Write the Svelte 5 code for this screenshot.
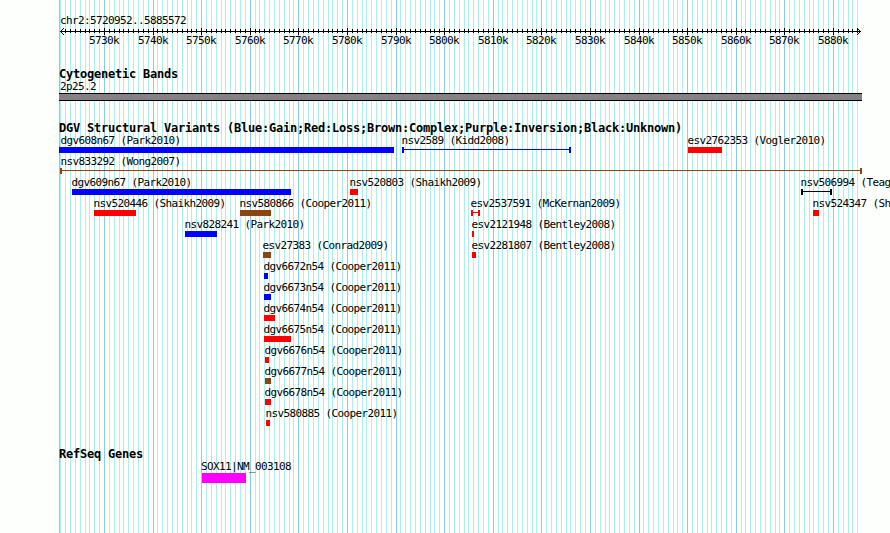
<script>
  const start = 5720952;
  const end = 5885572;
  const plotWidth = 800;
  const pad = 60;

  function toX(bp) {
    return Math.round(pad + ((bp - start) / (end - start)) * plotWidth);
  }

  const ticks = [];
  for (let bp = 5721000; bp <= end; bp += 1000) {
    ticks.push({ bp, x: toX(bp), major: bp % 10000 === 0 });
  }
  const majors = ticks.filter((t) => t.major);

  const colors = {
    gain: '#0000ff',
    loss: '#ff0000',
    complex: '#8b4513',
    unknown: '#000000'
  };

  // x and w are in image pixels, lx is where the label starts
  const lanes = [
    [
      { name: 'dgv608n67 (Park2010)', type: 'gain', x: 59, w: 335, lx: 61 },
      { name: 'nsv2589 (Kidd2008)', type: 'gain', x: 402, w: 169, span: true },
      { name: 'esv2762353 (Vogler2010)', type: 'loss', x: 688, w: 34 }
    ],
    [{ name: 'nsv833292 (Wong2007)', type: 'complex', x: 60, w: 802, span: true, lx: 61 }],
    [
      { name: 'dgv609n67 (Park2010)', type: 'gain', x: 72, w: 219 },
      { name: 'nsv520803 (Shaikh2009)', type: 'loss', x: 350, w: 8 },
      { name: 'nsv506994 (Teag', type: 'unknown', x: 801, w: 31, span: true }
    ],
    [
      { name: 'nsv520446 (Shaikh2009)', type: 'loss', x: 94, w: 42 },
      { name: 'nsv580866 (Cooper2011)', type: 'complex', x: 240, w: 31 },
      { name: 'esv2537591 (McKernan2009)', type: 'loss', x: 471, w: 9, span: true },
      { name: 'nsv524347 (Sh', type: 'loss', x: 813, w: 6 }
    ],
    [
      { name: 'nsv828241 (Park2010)', type: 'gain', x: 185, w: 32 },
      { name: 'esv2121948 (Bentley2008)', type: 'loss', x: 472, w: 2 }
    ],
    [
      { name: 'esv27383 (Conrad2009)', type: 'complex', x: 263, w: 8 },
      { name: 'esv2281807 (Bentley2008)', type: 'loss', x: 472, w: 4 }
    ],
    [{ name: 'dgv6672n54 (Cooper2011)', type: 'gain', x: 264, w: 4 }],
    [{ name: 'dgv6673n54 (Cooper2011)', type: 'gain', x: 264, w: 7 }],
    [{ name: 'dgv6674n54 (Cooper2011)', type: 'loss', x: 264, w: 11 }],
    [{ name: 'dgv6675n54 (Cooper2011)', type: 'loss', x: 264, w: 27 }],
    [{ name: 'dgv6676n54 (Cooper2011)', type: 'loss', x: 265, w: 4 }],
    [{ name: 'dgv6677n54 (Cooper2011)', type: 'complex', x: 265, w: 6 }],
    [{ name: 'dgv6678n54 (Cooper2011)', type: 'loss', x: 265, w: 6 }],
    [{ name: 'nsv580885 (Cooper2011)', type: 'loss', x: 266, w: 4 }]
  ];
</script>

<div class="browser">
  <svg class="grid" width="890" height="533" shape-rendering="crispEdges">
    {#each ticks as t}
      <rect x={t.x} y="0" width="1" height="533" fill={t.major ? '#87ceeb' : '#afeeee'} />
    {/each}
    <rect x="59" y="0" width="1" height="533" fill="#87ceeb" />
  </svg>

  <header class="scale">
    <div class="region">chr2:5720952..5885572</div>
    <svg class="ruler" width="890" height="9" shape-rendering="crispEdges">
      <rect x="60" y="4" width="801" height="1" />
      {#each ticks as t}
        {#if t.x > 64}
          <rect x={t.x} y={t.major ? 1 : 2} width="1" height={t.major ? 7 : 4} />
        {/if}
      {/each}
      <path d="M64 1L60.5 4.5L64 8" fill="none" stroke="#000" />
      <path d="M857 1L860.5 4.5L857 8" fill="none" stroke="#000" />
    </svg>
    <div class="tick-labels">
      {#each majors as t}
        <span style="left: {t.x - 15}px">{t.bp / 1000}k</span>
      {/each}
    </div>
  </header>

  <section class="cyto">
    <h2>Cytogenetic Bands</h2>
    <div class="band-label">2p25.2</div>
    <div class="band"></div>
  </section>

  <section class="variants">
    <h2>DGV Structural Variants (Blue:Gain;Red:Loss;Brown:Complex;Purple:Inversion;Black:Unknown)</h2>
    {#each lanes as lane}
      <div class="lane">
        {#each lane as f}
          <span class="name" style="left: {f.lx ?? f.x}px">{f.name}</span>
          <i
            class="bar"
            class:span={f.span}
            style="left: {f.x}px; width: {f.w}px; color: {colors[f.type]}"
          ></i>
        {/each}
      </div>
    {/each}
  </section>

  <section class="genes">
    <h2>RefSeq Genes</h2>
    <div class="gene">
      <span>SOX11|NM_003108</span>
      <i></i>
    </div>
  </section>
</div>

<style>
  :global(body) {
    margin: 0;
    background: #fdfffc;
  }

  .browser {
    position: relative;
    display: flex;
    flex-direction: column;
    box-sizing: border-box;
    width: 890px;
    height: 533px;
    padding-top: 15px;
    overflow: hidden;
    color: #000;
    font: 11px/12px "DejaVu Sans Mono", "Liberation Mono", monospace;
    letter-spacing: -0.62px;
    white-space: nowrap;
  }

  .grid {
    position: absolute;
    inset: 0;
  }

  header,
  section {
    position: relative;
  }

  h2 {
    margin: 0 0 0 59px;
    font-size: 12px;
    line-height: 13px;
    font-weight: 700;
    letter-spacing: -0.225px;
  }

  /* scale */
  .region {
    padding-left: 60px;
  }
  .ruler {
    display: block;
  }
  .tick-labels {
    position: relative;
    height: 12px;
    margin-top: -1px;
  }
  .tick-labels span {
    position: absolute;
  }

  /* cytogenetic band */
  .cyto {
    margin-top: 21px;
  }
  .band-label {
    padding-left: 60px;
  }
  .band {
    box-sizing: border-box;
    width: 803px;
    height: 8px;
    margin-left: 59px;
    background: #848284;
    border: solid #000;
    border-width: 1px 0;
  }

  /* structural variants */
  .variants {
    margin-top: 21px;
  }
  .lane {
    position: relative;
    height: 21px;
  }
  .name {
    position: absolute;
    top: 0;
    margin-left: -0.5px;
  }
  .bar {
    position: absolute;
    top: 12px;
    box-sizing: border-box;
    height: 6px;
    background: currentColor;
  }
  .bar.span {
    border: solid currentColor;
    border-width: 0 2px;
    background: linear-gradient(currentColor, currentColor) 0 2px / 100% 1px no-repeat;
  }

  /* genes */
  .genes {
    margin-top: 19px;
  }
  .gene {
    display: flex;
    flex-direction: column;
    padding-left: 202px;
  }
  .gene span {
    margin-left: -1px;
  }
  .gene i {
    width: 44px;
    height: 10px;
    background: #ff00ff;
  }
</style>
